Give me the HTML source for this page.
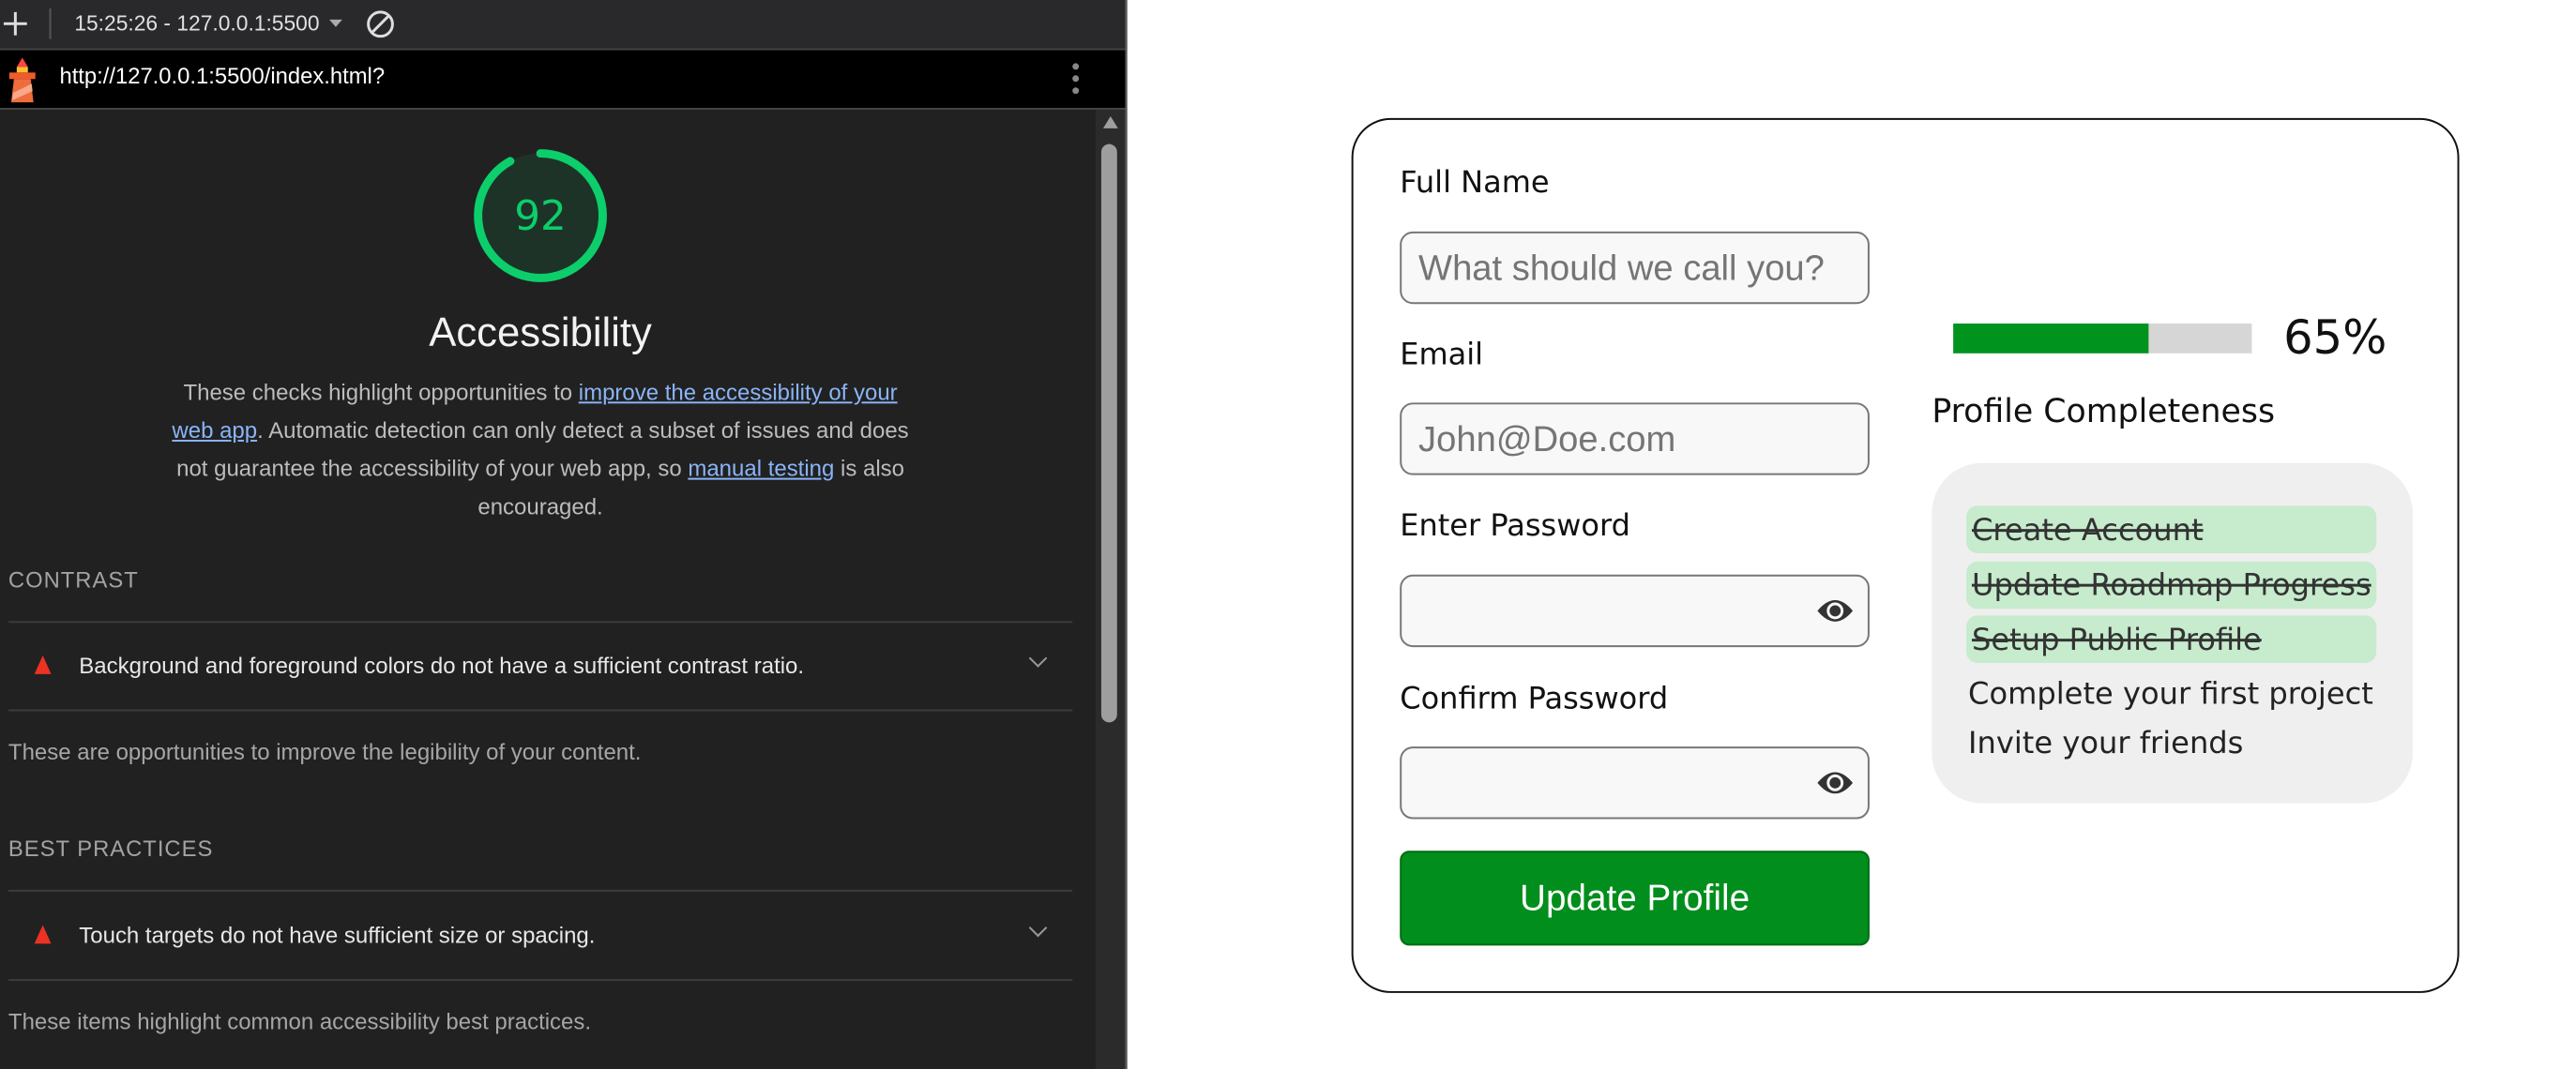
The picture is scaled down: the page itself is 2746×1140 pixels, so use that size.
<!DOCTYPE html>
<html><head><meta charset="utf-8"><style>
*{box-sizing:border-box;margin:0;padding:0}
body{width:2746px;height:1134px;overflow:hidden;background:#fff;position:relative;font-family:"Liberation Sans",Arial,sans-serif}
#w{position:absolute;left:0;top:0;width:2770px;height:1150px;transform:scale(0.9915);transform-origin:0 0}
.a{position:absolute;white-space:nowrap}
#left{position:absolute;left:0;top:0;width:1210px;height:1150px;background:#212121;overflow:hidden}
.hr{position:absolute;left:9px;width:1144px;height:2px;background:#3c3c3c}
.sec{color:#a3a3a3;font-size:24px;letter-spacing:1px}
.row{color:#e8e8e8;font-size:24.2px}
.sub{color:#a6a6a6;font-size:24.2px}
.tri{position:absolute;width:0;height:0;border-left:9px solid transparent;border-right:9px solid transparent;border-bottom:20px solid #eb3223}
.chev{position:absolute;width:14px;height:14px;border-right:2px solid #9a9a9a;border-bottom:2px solid #9a9a9a;transform:rotate(45deg)}
.lbl{font-family:"DejaVu Sans",sans-serif;font-size:32.3px;color:#111}
.inp{position:absolute;left:1505px;width:505px;height:78px;border:2px solid #777;border-radius:14px;background:#f8f8f8}
.ph{position:absolute;left:18px;top:16px;font-size:38.5px;color:#757575}
.pill{position:absolute;left:2114px;width:441px;height:51px;background:#c6ebcd;border-radius:12px}
.it{font-family:"DejaVu Sans",sans-serif;font-size:32.4px;color:#222}
.st{text-decoration:line-through;color:#333}
</style></head><body>
<div id="w">
<div id="left">
 <div class="a" style="left:0;top:0;width:1210px;height:52px;background:#29292c"></div>
 <div class="a" style="left:4px;top:24px;width:25px;height:3px;background:#ddd"></div>
 <div class="a" style="left:15px;top:13px;width:3px;height:25px;background:#ddd"></div>
 <div class="a" style="left:53px;top:9px;width:2px;height:33px;background:#555"></div>
 <div class="a" style="left:80px;top:12px;font-size:23px;color:#e0e0e0">15:25:26 - 127.0.0.1:5500</div>
 <div class="a" style="left:354px;top:21px;border-left:7px solid transparent;border-right:7px solid transparent;border-top:8px solid #aaa"></div>
 <svg class="a" style="left:392px;top:9px" width="34" height="34"><circle cx="17" cy="17" r="13" fill="none" stroke="#ddd" stroke-width="3"/><line x1="8" y1="26" x2="26" y2="8" stroke="#ddd" stroke-width="3"/></svg>
 <div class="a" style="left:0;top:52px;width:1210px;height:2px;background:#444"></div>
 <div class="a" style="left:0;top:54px;width:1210px;height:62px;background:#000"></div>
 <svg class="a" style="left:6px;top:60px" width="36" height="52"><polygon points="18,2 12,12 24,12" fill="#f44"/><rect x="12" y="12" width="12" height="6" fill="#fbc02d"/><rect x="4" y="18" width="28" height="7" fill="#ef5b2b"/><polygon points="9,25 27,25 30,50 6,50" fill="#ef6c3c"/><polygon points="8,40 28,30 29,38 7,48" fill="#f7a98a"/></svg>
 <div class="a" style="left:64px;top:69px;font-size:24px;color:#fff">http://127.0.0.1:5500/index.html?</div>
 <div class="a" style="left:1153px;top:68px;width:7px;height:7px;border-radius:50%;background:#888"></div>
 <div class="a" style="left:1153px;top:81px;width:7px;height:7px;border-radius:50%;background:#888"></div>
 <div class="a" style="left:1153px;top:94px;width:7px;height:7px;border-radius:50%;background:#888"></div>
 <div class="a" style="left:0;top:116px;width:1210px;height:2px;background:#444"></div>
 <div class="a" style="left:1178px;top:118px;width:32px;height:1040px;background:#2b2b2b"></div>
 <div class="a" style="left:1186px;top:125px;border-left:8px solid transparent;border-right:8px solid transparent;border-bottom:13px solid #9e9e9e"></div>
 <div class="a" style="left:1184px;top:155px;width:17px;height:622px;border-radius:9px;background:#9e9e9e"></div>
 <svg class="a" style="left:505px;top:156px" width="152" height="152"><circle cx="76" cy="76" r="67" fill="#1e3328" stroke="none"/><circle cx="76" cy="76" r="67" fill="none" stroke="#0cce6b" stroke-width="9" stroke-dasharray="387 34" transform="rotate(-90 76 76)" stroke-linecap="round"/></svg>
 <div class="a" style="left:541px;top:207px;width:80px;text-align:center;font-size:44px;color:#0cce6b;font-family:'DejaVu Sans',sans-serif">92</div>
 <div class="a" style="left:381px;top:333px;width:400px;text-align:center;font-size:44px;color:#f2f2f2">Accessibility</div>
 <div class="a" style="left:130px;top:402px;width:902px;text-align:center;white-space:normal;font-size:24.2px;line-height:41px;color:#bcbcbc">These checks highlight opportunities to <u style="color:#8ab4f8">improve the accessibility of your</u><br><u style="color:#8ab4f8">web app</u>. Automatic detection can only detect a subset of issues and does<br>not guarantee the accessibility of your web app, so <u style="color:#8ab4f8">manual testing</u> is also<br>encouraged.</div>
 <div class="a sec" style="left:9px;top:611px">CONTRAST</div>
 <div class="hr" style="top:668px"></div>
 <div class="tri" style="left:37px;top:705px"></div>
 <div class="a row" style="left:85px;top:703px">Background and foreground colors do not have a sufficient contrast ratio.</div>
 <div class="chev" style="left:1109px;top:701px"></div>
 <div class="hr" style="top:763px"></div>
 <div class="a sub" style="left:9px;top:796px">These are opportunities to improve the legibility of your content.</div>
 <div class="a sec" style="left:9px;top:900px">BEST PRACTICES</div>
 <div class="hr" style="top:957px"></div>
 <div class="tri" style="left:37px;top:995px"></div>
 <div class="a row" style="left:85px;top:993px">Touch targets do not have sufficient size or spacing.</div>
 <div class="chev" style="left:1109px;top:991px"></div>
 <div class="hr" style="top:1053px"></div>
 <div class="a sub" style="left:9px;top:1086px">These items highlight common accessibility best practices.</div>
</div>
<div class="a" style="left:1210px;top:0;width:2px;height:1150px;background:#555"></div>

<div class="a" style="left:1453px;top:127px;width:1191px;height:941px;border:2px solid #111;border-radius:42px"></div>
<div class="a lbl" style="left:1505px;top:177px">Full Name</div>
<div class="inp" style="top:249px"><span class="ph a">What should we call you?</span></div>
<div class="a lbl" style="left:1505px;top:362px">Email</div>
<div class="inp" style="top:433px"><span class="ph a">John@Doe.com</span></div>
<div class="a lbl" style="left:1505px;top:546px">Enter Password</div>
<div class="inp" style="top:618px"></div>
<div class="a lbl" style="left:1505px;top:732px">Confirm Password</div>
<div class="inp" style="top:803px"></div>
<svg class="a" style="left:1952px;top:640px" width="42" height="34"><path d="M2 17 Q21 -6 40 17 Q21 40 2 17Z" fill="#333"/><circle cx="21" cy="17" r="9" fill="#f8f8f8"/><circle cx="21" cy="17" r="6" fill="#333"/></svg>
<svg class="a" style="left:1952px;top:825px" width="42" height="34"><path d="M2 17 Q21 -6 40 17 Q21 40 2 17Z" fill="#333"/><circle cx="21" cy="17" r="9" fill="#f8f8f8"/><circle cx="21" cy="17" r="6" fill="#333"/></svg>
<div class="a" style="left:1505px;top:915px;width:505px;height:102px;background:#018e1c;border:2px solid #006d14;border-radius:10px;color:#fff;font-size:39px;text-align:center;line-height:100px">Update Profile</div>

<div class="a" style="left:2100px;top:348px;width:321px;height:32px;background:#d6d6d6"></div>
<div class="a" style="left:2100px;top:348px;width:210px;height:32px;background:#00931e"></div>
<div class="a" style="left:2455px;top:334px;font-family:'DejaVu Sans',sans-serif;font-size:50px;color:#111">65%</div>
<div class="a" style="left:2077px;top:423px;font-family:'DejaVu Sans',sans-serif;font-size:35px;color:#111">Profile Completeness</div>
<div class="a" style="left:2077px;top:498px;width:517px;height:366px;background:#efefef;border-radius:54px"></div>
<div class="pill" style="top:544px"></div>
<div class="pill" style="top:604px"></div>
<div class="pill" style="top:662px"></div>
<div class="a it st" style="left:2120px;top:551px">Create Account</div>
<div class="a it st" style="left:2120px;top:610px">Update Roadmap Progress</div>
<div class="a it st" style="left:2120px;top:669px">Setup Public Profile</div>
<div class="a it" style="left:2116px;top:727px">Complete your first project</div>
<div class="a it" style="left:2116px;top:780px">Invite your friends</div>
</div>
</body></html>
